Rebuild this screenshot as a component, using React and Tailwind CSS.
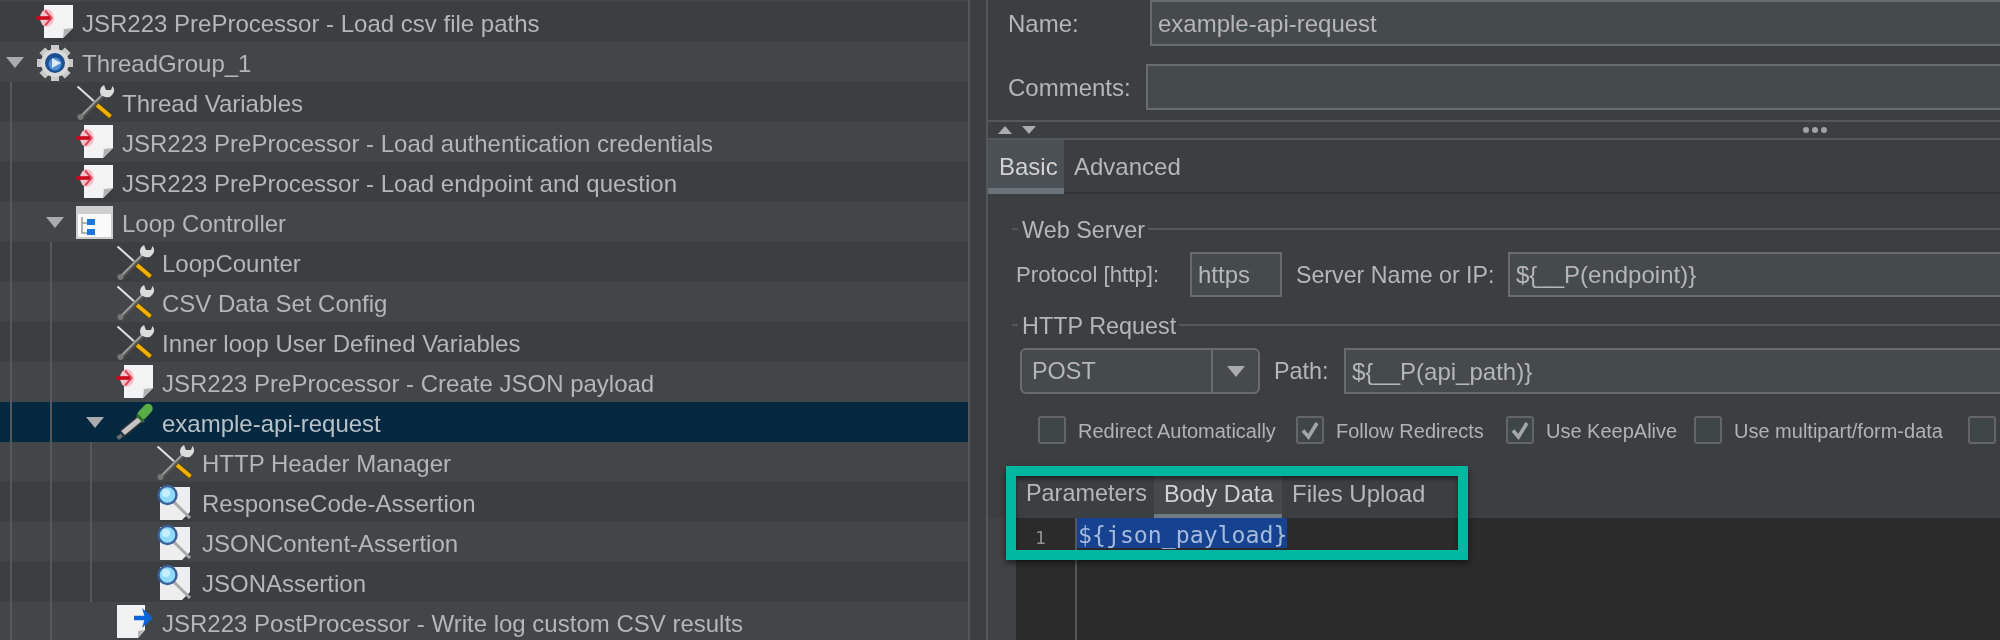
const FONT = 'font-["Liberation_Sans",Arial,sans-serif]'

const Page = ({ fold = true }) => (
  <>
    <polygon points="8,3 37,3 37,26 27,36 8,36" fill="#f3f3f3" />
    {fold && <polygon points="37,26 27,36 28,27" fill="#b4b4b4" />}
  </>
)

const PreIcon = () => (
  <svg viewBox="0 0 40 40" className="w-10 h-10">
    <Page />
    <ellipse cx="11" cy="16" rx="7" ry="9" fill="#f6c3cb" />
    <path d="M9 8.5 L15.5 16 L9 23.5" fill="none" stroke="#e0485c" strokeWidth="2.2" />
    <path d="M0 16 H14" stroke="#c90a1c" strokeWidth="3.6" />
  </svg>
)

const PostIcon = () => (
  <svg viewBox="0 0 40 40" className="w-10 h-10">
    <polygon points="1,3 29,3 29,28 22,36 1,36" fill="#f2f2f2" />
    <polygon points="29,28 22,36 22,29" fill="#b4b4b4" />
    <path d="M18 16 H32" stroke="#0a66d8" strokeWidth="4.5" />
    <polygon points="26,6 37,16 26,26 29,16" fill="#0a66d8" />
  </svg>
)

const GearIcon = () => (
  <svg viewBox="0 0 40 40" className="w-10 h-10">
    {[0, 45, 90, 135, 180, 225, 270, 315].map((a) => (
      <rect key={a} x="15" y="3" width="8" height="8" fill="#c9c9c9" transform={`rotate(${a} 19 21)`} />
    ))}
    <circle cx="19" cy="21" r="14" fill="#d9d9d9" />
    <circle cx="19" cy="21" r="10" fill="#1c4f92" />
    <circle cx="19" cy="22" r="6.5" fill="#4d8fd6" />
    <polygon points="16,16 25,21 16,26" fill="#dfeaf6" />
  </svg>
)

const WrenchIcon = () => (
  <svg viewBox="0 0 40 40" className="w-10 h-10">
    <path d="M1.5 4.5 L20 21" stroke="#e2e2e2" strokeWidth="2" />
    <path d="M5 35 L27 13" stroke="#5a5a5a" strokeWidth="4" />
    <path d="M5 34 L26 13" stroke="#a8a8a8" strokeWidth="1.6" />
    <circle cx="4.5" cy="35" r="3" fill="#777" />
    <path d="M25 13 A7 7 0 0 1 28 3 L30 8 L35 8 L36.5 4 A7 7 0 0 1 29 15 Z" fill="#dcdcdc" />
    <path d="M21 23 L35 35" stroke="#5a4400" strokeWidth="5.5" />
    <path d="M21 23 L34.5 34.5" stroke="#f1b100" strokeWidth="3.8" />
  </svg>
)

const LoopIcon = () => (
  <svg viewBox="0 0 40 40" className="w-10 h-10">
    <rect x="0" y="4" width="37" height="33" fill="#cfcfcf" />
    <rect x="2" y="12" width="33" height="23" fill="#fbfbfb" />
    <path d="M6 15 V31 H14 M6 21 H14" fill="none" stroke="#9a9a9a" strokeWidth="1.5" />
    <rect x="11" y="17" width="8" height="6" fill="#1e78dc" />
    <rect x="11" y="27" width="8" height="6" fill="#1e78dc" />
  </svg>
)

const DropperIcon = () => (
  <svg viewBox="0 0 40 40" className="w-10 h-10">
    <path d="M24 17 L6 32" stroke="#2e3236" strokeWidth="8.5" />
    <path d="M24 17 L7 31" stroke="#c4c4c4" strokeWidth="5.5" />
    <path d="M6 33 L1.5 36.5" stroke="#6b6b6b" strokeWidth="4" />
    <path d="M32 6.5 L26 13" stroke="#59ad45" strokeWidth="9.5" strokeLinecap="round" />
    <path d="M21 13 L28 20" stroke="#2f6f2a" strokeWidth="3" />
  </svg>
)

const AssertIcon = () => (
  <svg viewBox="0 0 40 40" className="w-10 h-10">
    <polygon points="4,5 34,5 34,30 26,38 4,38" fill="#eeeeee" />
    <path d="M18 20 L34 36" stroke="#a9a9a9" strokeWidth="3" />
    <circle cx="11.5" cy="13" r="9" fill="#8fdcff" stroke="#3c5f9a" strokeWidth="2.4" />
    <circle cx="10" cy="11" r="4" fill="#c7f0ff" />
  </svg>
)

const icons = {
  pre: PreIcon,
  post: PostIcon,
  gear: GearIcon,
  wrench: WrenchIcon,
  loop: LoopIcon,
  dropper: DropperIcon,
  assert: AssertIcon,
}

const rows = [
  { level: 0, icon: 'pre', label: 'JSR223 PreProcessor - Load csv file paths' },
  { level: 0, icon: 'gear', label: 'ThreadGroup_1', open: true },
  { level: 1, icon: 'wrench', label: 'Thread Variables' },
  { level: 1, icon: 'pre', label: 'JSR223 PreProcessor - Load authentication credentials' },
  { level: 1, icon: 'pre', label: 'JSR223 PreProcessor - Load endpoint and question' },
  { level: 1, icon: 'loop', label: 'Loop Controller', open: true },
  { level: 2, icon: 'wrench', label: 'LoopCounter' },
  { level: 2, icon: 'wrench', label: 'CSV Data Set Config' },
  { level: 2, icon: 'wrench', label: 'Inner loop User Defined Variables' },
  { level: 2, icon: 'pre', label: 'JSR223 PreProcessor - Create JSON payload' },
  { level: 2, icon: 'dropper', label: 'example-api-request', open: true, selected: true },
  { level: 3, icon: 'wrench', label: 'HTTP Header Manager' },
  { level: 3, icon: 'assert', label: 'ResponseCode-Assertion' },
  { level: 3, icon: 'assert', label: 'JSONContent-Assertion' },
  { level: 3, icon: 'assert', label: 'JSONAssertion' },
  { level: 2, icon: 'post', label: 'JSR223 PostProcessor - Write log custom CSV results' },
]

const Triangle = ({ className = 'w-[18px] h-[11px]' }) => (
  <svg viewBox="0 0 18 11" className={className}>
    <polygon points="0,0 18,0 9,11" fill="#a9abad" />
  </svg>
)

const TreeRow = ({ row, index }) => {
  const Icon = icons[row.icon]
  const bg = row.selected ? 'bg-[#03283f]' : index % 2 === 0 ? 'bg-[#3c3f41]' : 'bg-[#424648]'
  return (
    <div className={`flex h-10 shrink-0 items-center ${bg}`}>
      {Array.from({ length: row.level }).map((_, i) => (
        <div key={i} className="h-full w-10 shrink-0 pl-[10px]">
          <div className="h-full w-[2px] bg-[#55585a]" />
        </div>
      ))}
      <div className="flex w-9 shrink-0 justify-center pr-[7px]">{row.open && <Triangle />}</div>
      <div className="w-[46px] shrink-0"><Icon /></div>
      <span className={`whitespace-nowrap pt-[3px] text-[24px] ${row.selected ? 'text-[#b9c0c6]' : 'text-[#b4b6b7]'}`}>{row.label}</span>
    </div>
  )
}

const Field = ({ className = '', children }) => (
  <div className={`flex h-full items-center border-2 border-[#6a6b6c] bg-[#454a4a] pl-[6px] pt-[1px] text-[24px] text-[#b4b6b7] ${className}`}>
    {children}
  </div>
)

const Legend = ({ title, className }) => (
  <div className={`ml-6 flex h-6 items-center ${className}`}>
    <div className="h-[2px] w-[6px] bg-[#55585a]" />
    <span className="ml-1 pt-[3px] text-[23.4px] text-[#b4b6b7]">{title}</span>
    <div className="ml-[3px] h-[2px] flex-1 bg-[#55585a]" />
  </div>
)

const CheckBox = ({ checked, label, className = '' }) => (
  <div className={`flex shrink-0 items-center ${className}`}>
    <div className="flex h-7 w-7 items-center justify-center rounded-[3px] border-2 border-[#636567] bg-[#3f4648]">
      {checked && (
        <svg viewBox="0 0 24 24" className="h-6 w-6">
          <path d="M5 12.5 L10.5 19 L19 5" fill="none" stroke="#a3a5a6" strokeWidth="3.6" />
        </svg>
      )}
    </div>
    {label && <span className="ml-3 whitespace-nowrap pt-[2px] text-[20px] text-[#b0b2b3]">{label}</span>}
  </div>
)

export default function App() {
  return (
    <div className={`relative flex h-[640px] w-[2000px] overflow-hidden bg-[#3c3f41] blur-[0.35px] ${FONT}`}>
      {/* test plan tree */}
      <div className="flex w-[968px] shrink-0 flex-col overflow-hidden">
        <div className="h-[2px] shrink-0 bg-[#424648]" />
        {rows.map((row, i) => (
          <TreeRow key={row.label} row={row} index={i} />
        ))}
      </div>
      <div className="w-5 shrink-0 border-x-2 border-[#55585a]" />

      {/* sampler settings */}
      <div className="flex min-w-0 flex-1 flex-col">
        <div className="flex h-[46px] shrink-0 items-center pl-5">
          <span className="w-[142px] shrink-0 pt-[1px] text-[24px] text-[#b4b6b7]">Name:</span>
          <Field className="flex-1 border-r-0">example-api-request</Field>
        </div>
        <div className="mt-[18px] flex h-[46px] shrink-0 items-center pl-5">
          <span className="w-[138px] shrink-0 pt-[1px] text-[24px] text-[#b4b6b7]">Comments:</span>
          <Field className="flex-1 border-r-0" />
        </div>

        <div className="mt-[10px] flex h-5 shrink-0 items-center border-y-2 border-[#55585a] pl-[10px]">
          <svg viewBox="0 0 14 8" className="h-2 w-[14px]"><polygon points="7,0 14,8 0,8" fill="#a9abad" /></svg>
          <svg viewBox="0 0 14 8" className="ml-[10px] h-2 w-[14px]"><polygon points="0,0 14,0 7,8" fill="#a9abad" /></svg>
          <div className="ml-[767px] flex gap-[3px]">
            <div className="h-[6px] w-[6px] rounded-full bg-[#a0a2a4]" />
            <div className="h-[6px] w-[6px] rounded-full bg-[#a0a2a4]" />
            <div className="h-[6px] w-[6px] rounded-full bg-[#a0a2a4]" />
          </div>
        </div>

        <div className="flex h-[54px] shrink-0 border-b-2 border-[#333638] text-[24px]">
          <div className="flex h-[54px] w-[76px] items-center border-b-[6px] border-[#6a7379] bg-[#4a5053] pl-[11px] pt-[5px] text-[#d0d2d3]">Basic</div>
          <div className="ml-[10px] flex items-center pt-[2px] text-[#b4b6b7]">Advanced</div>
        </div>

        <Legend title="Web Server" className="mt-[23px]" />

        <div className="mt-[11px] flex h-[45px] shrink-0 items-center pl-7 text-[24px] text-[#b4b6b7]">
          <span className="w-[174px] shrink-0 whitespace-nowrap pt-[1px] text-[22.2px]">Protocol [http]:</span>
          <Field className="w-[92px] shrink-0">https</Field>
          <span className="ml-[14px] w-[212px] shrink-0 whitespace-nowrap pt-[1px] text-[23.2px]">Server Name or IP:</span>
          <Field className="flex-1 border-r-0">{'${__P(endpoint)}'}</Field>
        </div>

        <Legend title="HTTP Request" className="mt-4" />

        <div className="mt-[11px] flex h-[46px] shrink-0 items-center pl-8 text-[24px] text-[#b4b6b7]">
          <div className="flex h-full w-[240px] shrink-0 rounded-[6px] border-2 border-[#6a6b6c] bg-[#454a4a]">
            <div className="flex w-[191px] items-center border-r-2 border-[#6a6b6c] pl-[10px] pt-[1px] text-[23.4px]">POST</div>
            <div className="flex flex-1 items-center justify-center">
              <Triangle />
            </div>
          </div>
          <span className="ml-[14px] w-[70px] shrink-0 pt-[1px] text-[23.4px]">Path:</span>
          <Field className="flex-1 border-r-0">{'${__P(api_path)}'}</Field>
        </div>

        <div className="mt-[22px] flex h-7 shrink-0 items-center pl-[50px]">
          <CheckBox label="Redirect Automatically" className="w-[258px]" />
          <CheckBox checked label="Follow Redirects" className="w-[210px]" />
          <CheckBox checked label="Use KeepAlive" className="w-[188px]" />
          <CheckBox label="Use multipart/form-data" className="w-[274px]" />
          <CheckBox />
        </div>

        <div className="mt-8 flex min-h-0 flex-1 flex-col">
          <div className="ml-7 flex h-[42px] shrink-0 text-[23.4px] text-[#b4b6b7]">
            <div className="flex w-[138px] items-center pb-[6px] pl-[10px]">Parameters</div>
            <div className="flex h-[44px] w-[128px] items-center border-b-[6px] border-[#6f7a85] bg-[#45494c] pl-[10px] text-[#d0d2d3]">Body Data</div>
            <div className="ml-[10px] flex items-center pb-[6px] text-[24px]">Files Upload</div>
          </div>
          <div className="flex flex-1 bg-[#404345] pl-7">
            <div className="flex flex-1 bg-[#2b2b2b]">
              <div className="w-[61px] shrink-0 border-r-2 border-[#55585a] pl-[19px] pt-[3px] font-['DejaVu_Sans_Mono',monospace] text-[18px] leading-[34px] text-[#8f9193]">1</div>
              <div className="h-[30px] w-[210px] bg-[#17428f] pl-[1px] pt-[3px] font-['DejaVu_Sans_Mono',monospace] text-[23.2px] leading-[28px] text-[#a5bbdd]">
                {'${json_payload}'}
              </div>
            </div>
          </div>
        </div>
      </div>

      {/* highlight box drawn over the screenshot */}
      <div className="absolute left-[1006px] top-[466px] h-[94px] w-[462px] border-[10px] border-[#00b8a2] shadow-[0_3px_6px_rgba(0,0,0,0.55),inset_0_3px_4px_rgba(0,0,0,0.45)]" />
    </div>
  )
}
